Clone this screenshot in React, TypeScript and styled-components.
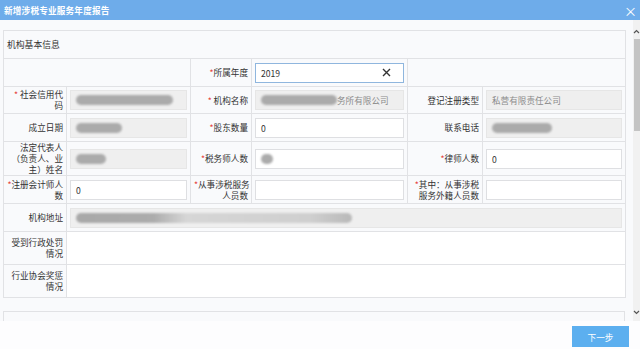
import React from 'react'
import styled, { createGlobalStyle } from 'styled-components'

const GlobalStyle = createGlobalStyle`
  html, body {
    margin: 0;
    padding: 0;
  }
  body {
    font-family: "Noto Sans CJK SC", "Liberation Sans", sans-serif;
    background: #ffffff;
  }
`

const Dialog = styled.div`
  width: 640px;
  height: 349px;
  display: flex;
  flex-direction: column;
  background: #fdfdfe;
  overflow: hidden;
`

const TitleBar = styled.div`
  height: 20px;
  flex: none;
  background: #6eacea;
  display: flex;
  align-items: center;
  justify-content: space-between;
  padding: 0 3px 0 4px;
  color: #fff;
`

const Title = styled.span`
  font-size: 8.6px;
  font-weight: bold;
  letter-spacing: 0.2px;
`

const Close = styled.span`
  font-size: 13px;
  line-height: 1;
`

const Body = styled.div`
  height: 301px;
  flex: none;
  display: flex;
  background: #f9fafc;
`

const Scroller = styled.div`
  flex: 1;
  overflow: hidden;
  padding: 10px 8px 0 3px;
`

const ScrollBar = styled.div`
  width: 7px;
  flex: none;
  display: flex;
  flex-direction: column;
  align-items: center;
  background: #f1f1f1;
  padding: 9px 0 6px;
`

const Thumb = styled.div`
  width: 6px;
  height: 92px;
  margin-top: 5px;
  background: #c4c4c4;
`

const Track = styled.div`
  flex: 1;
`

const FormTable = styled.table`
  width: 622px;
  table-layout: fixed;
  border-collapse: collapse;
  font-size: 8.6px;
  color: #333;

  td {
    border: 1px solid #e1e2e5;
    padding: 0 3px;
    vertical-align: middle;
  }
`

const Row = styled.tr<{ $h: number }>`
  height: ${p => p.$h}px;
`

const SectionHead = styled.td`
  text-align: left;
  font-size: 8.8px;
`

const Label = styled.td`
  text-align: right;
  line-height: 11px;
  white-space: nowrap;
`

const Req = styled.span`
  color: #e53935;
`

const Cell = styled.td<{ $flush?: boolean }>`
  && {
    padding: ${p => (p.$flush ? '0' : '0 3px')};
    background: ${p => (p.$flush ? '#ffffff' : 'transparent')};
  }
`

const Field = styled.div<{ $disabled?: boolean; $focus?: boolean }>`
  height: 20px;
  box-sizing: border-box;
  display: flex;
  align-items: center;
  padding: 0 5px;
  overflow: hidden;
  white-space: nowrap;
  background: ${p => (p.$disabled ? '#efefef' : '#ffffff')};
  border: 1px solid ${p => (p.$focus ? '#8fb6de' : p.$disabled ? '#e6e6e6' : '#dedfe2')};
  color: ${p => (p.$disabled ? '#8a8a8a' : '#333')};
`

const FieldText = styled.span`
  flex: 1;
`

const Blur = styled.span<{ $w: number; $fade?: boolean }>`
  display: inline-block;
  width: ${p => p.$w}px;
  height: 10px;
  border-radius: 6px;
  flex: none;
  background: ${p =>
    p.$fade
      ? 'linear-gradient(90deg, #a9a9a9 0%, #acacac 28%, #d6d6d6 40%, #cfcfcf 85%, #b9b9b9 100%)'
      : '#ababab'};
  filter: blur(0.8px);
`

const Memo = styled.div`
  height: 31px;
  background: #fff;
`

const NextSection = styled.div`
  margin-top: 13px;
  height: 40px;
  border: 1px solid #e1e2e5;
  width: 620px;
`

const Footer = styled.div`
  flex: 1;
  display: flex;
  align-items: center;
  justify-content: flex-end;
  padding: 0 11px 0 0;
  background: #fdfdfe;
`

const NextButton = styled.button`
  width: 57px;
  height: 21px;
  margin-top: 3px;
  border: none;
  background: #5cafef;
  color: #fff;
  font-family: inherit;
  font-size: 8.6px;
  padding: 0;
`

const Caret = ({ up }: { up?: boolean }) => (
  <svg width="7" height="5" viewBox="0 0 7 5">
    <polyline
      points={up ? '1,4 3.5,1.5 6,4' : '1,1 3.5,3.5 6,1'}
      fill="none"
      stroke="#555"
      strokeWidth="1.2"
    />
  </svg>
)

const ClearIcon = () => (
  <svg width="9" height="9" viewBox="0 0 9 9">
    <path d="M1 1 L8 8 M8 1 L1 8" stroke="#333" strokeWidth="1.4" />
  </svg>
)

const App = () => {
  return (
    <Dialog>
      <GlobalStyle />
      <TitleBar>
        <Title>新增涉税专业服务年度报告</Title>
        <Close>×</Close>
      </TitleBar>
      <Body>
        <Scroller>
          <FormTable>
            <colgroup>
              <col style={{ width: 63 }} />
              <col style={{ width: 124 }} />
              <col style={{ width: 61 }} />
              <col style={{ width: 156 }} />
              <col style={{ width: 75 }} />
              <col style={{ width: 143 }} />
            </colgroup>
            <tbody>
              <Row $h={28}>
                <SectionHead colSpan={6}>机构基本信息</SectionHead>
              </Row>
              <Row $h={28}>
                <td colSpan={2} />
                <Label><Req>*</Req>所属年度</Label>
                <Cell>
                  <Field $focus>
                    <FieldText>2019</FieldText>
                    <ClearIcon />
                    <span style={{ width: 7 }} />
                  </Field>
                </Cell>
                <td colSpan={2} />
              </Row>
              <Row $h={27}>
                <Label><Req>* </Req>社会信用代<br />码</Label>
                <Cell><Field $disabled><Blur $w={97} /></Field></Cell>
                <Label><Req>* </Req>机构名称</Label>
                <Cell>
                  <Field $disabled>
                    <Blur $w={76} />
                    <FieldText>务所有限公司</FieldText>
                  </Field>
                </Cell>
                <Label>登记注册类型</Label>
                <Cell><Field $disabled>私营有限责任公司</Field></Cell>
              </Row>
              <Row $h={28}>
                <Label>成立日期</Label>
                <Cell><Field $disabled><Blur $w={46} /></Field></Cell>
                <Label><Req>*</Req>股东数量</Label>
                <Cell><Field>0</Field></Cell>
                <Label>联系电话</Label>
                <Cell><Field $disabled><Blur $w={60} /></Field></Cell>
              </Row>
              <Row $h={34}>
                <Label>法定代表人<br />（负责人、业<br />主）姓名</Label>
                <Cell><Field $disabled><Blur $w={30} /></Field></Cell>
                <Label><Req>*</Req>税务师人数</Label>
                <Cell><Field><Blur $w={12} /></Field></Cell>
                <Label><Req>*</Req>律师人数</Label>
                <Cell><Field>0</Field></Cell>
              </Row>
              <Row $h={28}>
                <Label><Req>*</Req>注册会计师人<br />数</Label>
                <Cell><Field>0</Field></Cell>
                <Label><Req>*</Req>从事涉税服务<br />人员数</Label>
                <Cell><Field /></Cell>
                <Label><Req>*</Req>其中：从事涉税<br />服务外籍人员数</Label>
                <Cell><Field /></Cell>
              </Row>
              <Row $h={28}>
                <Label>机构地址</Label>
                <Cell colSpan={5}><Field $disabled><Blur $w={276} $fade /></Field></Cell>
              </Row>
              <Row $h={33}>
                <Label>受到行政处罚<br />情况</Label>
                <Cell colSpan={5} $flush><Memo /></Cell>
              </Row>
              <Row $h={33}>
                <Label>行业协会奖惩<br />情况</Label>
                <Cell colSpan={5} $flush><Memo /></Cell>
              </Row>
            </tbody>
          </FormTable>
          <NextSection />
        </Scroller>
        <ScrollBar>
          <Caret up />
          <Thumb />
          <Track />
          <Caret />
        </ScrollBar>
      </Body>
      <Footer>
        <NextButton>下一步</NextButton>
      </Footer>
    </Dialog>
  )
}

export default App
